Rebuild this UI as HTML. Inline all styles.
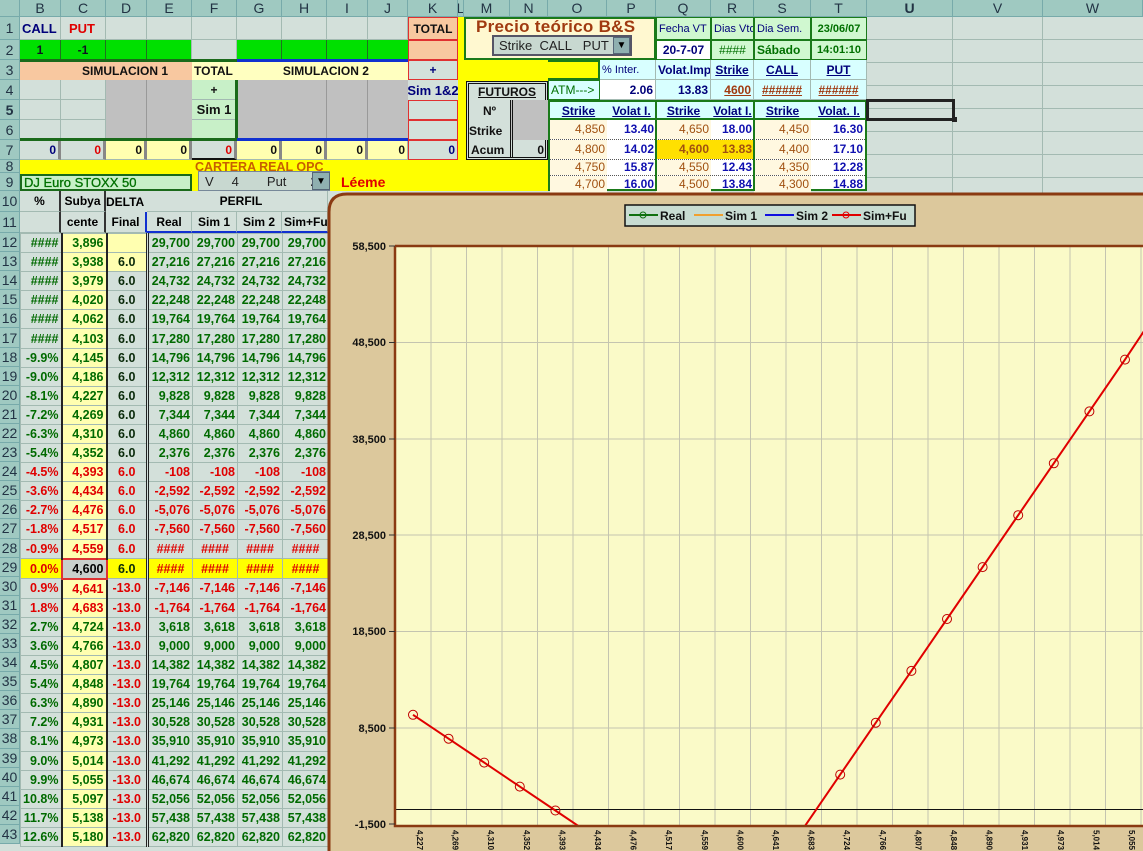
<!DOCTYPE html>
<html style="overflow:hidden"><head><meta charset="utf-8"><style>
body{margin:0;width:1143px;height:851px;overflow:hidden;position:relative;background:#d3e0da;font:bold 12px "Liberation Sans",sans-serif;}
.a{position:absolute;box-sizing:border-box;display:flex;align-items:center;white-space:nowrap;overflow:hidden;border-right:1px solid #a3bab2;border-bottom:1px solid #a3bab2;padding:0 2px;}
.r{justify-content:flex-end}.m{justify-content:center}
.h{background:#9fc9c1;color:#234;font-weight:normal;font-size:14px;justify-content:center;border-right:1px solid #7aa;border-bottom:1px solid #7aa}
.nv{color:#00007a}.rd{color:#e00000}.gn{color:#007000}.u{text-decoration:underline}
table.t{position:absolute;left:20px;top:233px;border-collapse:collapse;table-layout:fixed;}
table.t td{height:18.1px;padding:0 2px;text-align:right;border:1px solid #a3bab2;color:#006a00;background:#d3e0da;white-space:nowrap;overflow:hidden;font-size:12.5px}
table.t td.c{background:#ffffb0;border-left:2px solid #222;border-right:2px solid #222}
table.t td.d{text-align:center;border-right:3px double #222;color:#0a2a0a}
table.t tr.n td{color:#e00000}
table.t tr.y td{background:#ffff00;color:#e00000}
table.t tr.y td.c{background:#c8d0cc;color:#000;border:2px solid #d33}
table.t tr.y td.d{color:#0a2a0a}
table.t tr.p td.d{color:#e00000}
.sr{display:flex;box-sizing:border-box}
.sr div{box-sizing:border-box;text-align:right;padding-right:2px}
.sr .s{background:#fff8e0;color:#a05010;font-weight:normal}
.sr .v{color:#1010b0}
</style></head><body>
<div class="a h" style="left:0;top:0;width:20px;height:17px"></div>
<div class="a h" style="left:20px;top:0;width:41px;height:17px">B</div>
<div class="a h" style="left:61px;top:0;width:45px;height:17px">C</div>
<div class="a h" style="left:106px;top:0;width:41px;height:17px">D</div>
<div class="a h" style="left:147px;top:0;width:45px;height:17px">E</div>
<div class="a h" style="left:192px;top:0;width:45px;height:17px">F</div>
<div class="a h" style="left:237px;top:0;width:45px;height:17px">G</div>
<div class="a h" style="left:282px;top:0;width:45px;height:17px">H</div>
<div class="a h" style="left:327px;top:0;width:41px;height:17px">I</div>
<div class="a h" style="left:368px;top:0;width:40px;height:17px">J</div>
<div class="a h" style="left:408px;top:0;width:50px;height:17px">K</div>
<div class="a h" style="left:458px;top:0;width:6px;height:17px">L</div>
<div class="a h" style="left:464px;top:0;width:46px;height:17px">M</div>
<div class="a h" style="left:510px;top:0;width:38px;height:17px">N</div>
<div class="a h" style="left:548px;top:0;width:59px;height:17px">O</div>
<div class="a h" style="left:607px;top:0;width:49px;height:17px">P</div>
<div class="a h" style="left:656px;top:0;width:55px;height:17px">Q</div>
<div class="a h" style="left:711px;top:0;width:43px;height:17px">R</div>
<div class="a h" style="left:754px;top:0;width:57px;height:17px">S</div>
<div class="a h" style="left:811px;top:0;width:56px;height:17px">T</div>
<div class="a h" style="left:867px;top:0;width:86px;height:17px;font-weight:bold">U</div>
<div class="a h" style="left:953px;top:0;width:90px;height:17px">V</div>
<div class="a h" style="left:1043px;top:0;width:100px;height:17px">W</div>
<div class="a h" style="left:0;top:17px;width:20px;height:23px">1</div>
<div class="a h" style="left:0;top:40px;width:20px;height:20px">2</div>
<div class="a h" style="left:0;top:60px;width:20px;height:20px">3</div>
<div class="a h" style="left:0;top:80px;width:20px;height:20px">4</div>
<div class="a h" style="left:0;top:100px;width:20px;height:20px;font-weight:bold">5</div>
<div class="a h" style="left:0;top:120px;width:20px;height:20px">6</div>
<div class="a h" style="left:0;top:140px;width:20px;height:20px">7</div>
<div class="a h" style="left:0;top:160px;width:20px;height:13px">8</div>
<div class="a h" style="left:0;top:173px;width:20px;height:18px">9</div>
<div class="a h" style="left:0;top:191px;width:20px;height:21px">10</div>
<div class="a h" style="left:0;top:212px;width:20px;height:21px">11</div>
<div style="position:absolute;left:0;top:233px;width:20px">
<div class="a h" style="position:relative;width:20px;height:19.1px">12</div><div class="a h" style="position:relative;width:20px;height:19.1px">13</div><div class="a h" style="position:relative;width:20px;height:19.1px">14</div><div class="a h" style="position:relative;width:20px;height:19.1px">15</div><div class="a h" style="position:relative;width:20px;height:19.1px">16</div><div class="a h" style="position:relative;width:20px;height:19.1px">17</div><div class="a h" style="position:relative;width:20px;height:19.1px">18</div><div class="a h" style="position:relative;width:20px;height:19.1px">19</div><div class="a h" style="position:relative;width:20px;height:19.1px">20</div><div class="a h" style="position:relative;width:20px;height:19.1px">21</div><div class="a h" style="position:relative;width:20px;height:19.1px">22</div><div class="a h" style="position:relative;width:20px;height:19.1px">23</div><div class="a h" style="position:relative;width:20px;height:19.1px">24</div><div class="a h" style="position:relative;width:20px;height:19.1px">25</div><div class="a h" style="position:relative;width:20px;height:19.1px">26</div><div class="a h" style="position:relative;width:20px;height:19.1px">27</div><div class="a h" style="position:relative;width:20px;height:19.1px">28</div><div class="a h" style="position:relative;width:20px;height:19.1px">29</div><div class="a h" style="position:relative;width:20px;height:19.1px">30</div><div class="a h" style="position:relative;width:20px;height:19.1px">31</div><div class="a h" style="position:relative;width:20px;height:19.1px">32</div><div class="a h" style="position:relative;width:20px;height:19.1px">33</div><div class="a h" style="position:relative;width:20px;height:19.1px">34</div><div class="a h" style="position:relative;width:20px;height:19.1px">35</div><div class="a h" style="position:relative;width:20px;height:19.1px">36</div><div class="a h" style="position:relative;width:20px;height:19.1px">37</div><div class="a h" style="position:relative;width:20px;height:19.1px">38</div><div class="a h" style="position:relative;width:20px;height:19.1px">39</div><div class="a h" style="position:relative;width:20px;height:19.1px">40</div><div class="a h" style="position:relative;width:20px;height:19.1px">41</div><div class="a h" style="position:relative;width:20px;height:19.1px">42</div><div class="a h" style="position:relative;width:20px;height:19.1px">43</div>
</div>

<div class="a nv" style="left:20px;top:17px;width:41px;height:23px;font-size:13px">CALL</div>
<div class="a rd" style="left:61px;top:17px;width:45px;height:23px;font-size:13px;padding-left:8px">PUT</div>
<div class="a" style="left:106px;top:17px;width:41px;height:23px"></div>
<div class="a" style="left:147px;top:17px;width:45px;height:23px"></div>
<div class="a" style="left:192px;top:17px;width:45px;height:23px"></div>
<div class="a" style="left:237px;top:17px;width:45px;height:23px"></div>
<div class="a" style="left:282px;top:17px;width:45px;height:23px"></div>
<div class="a" style="left:327px;top:17px;width:41px;height:23px"></div>
<div class="a" style="left:368px;top:17px;width:40px;height:23px"></div>
<div class="a m" style="left:408px;top:17px;width:50px;height:23px;background:#f8c8a0;border:1px solid #e03030;color:#111">TOTAL</div>
<div style="position:absolute;left:20px;top:40px;width:172px;height:20px;background:#00e000"></div>
<div style="position:absolute;left:237px;top:40px;width:171px;height:20px;background:#00e000"></div>
<div class="a m" style="left:20px;top:40px;width:41px;height:20px;background:none;border-right:1px solid #207020;color:#112">1</div>
<div class="a m" style="left:61px;top:40px;width:45px;height:20px;background:none;border-right:1px solid #207020;color:#112">-1</div>
<div class="a" style="left:106px;top:40px;width:41px;height:20px;border-right:1px solid #207020"></div>
<div class="a" style="left:147px;top:40px;width:45px;height:20px"></div>
<div class="a" style="left:192px;top:40px;width:45px;height:20px"></div>
<div class="a" style="left:237px;top:40px;width:45px;height:20px;border-right:1px solid #207020"></div>
<div class="a" style="left:282px;top:40px;width:45px;height:20px;border-right:1px solid #207020"></div>
<div class="a" style="left:327px;top:40px;width:41px;height:20px;border-right:1px solid #207020"></div>
<div class="a" style="left:408px;top:40px;width:50px;height:20px;background:#f8c8a0;border:1px solid #e03030"></div>
<div style="position:absolute;left:20px;top:59px;width:217px;height:3px;background:#1a6a1a"></div>
<div style="position:absolute;left:237px;top:59px;width:171px;height:3px;background:#1030d0"></div>
<div class="a" style="left:20px;top:62px;width:172px;height:18px;background:#f8c8a0;justify-content:center;padding-left:40px;color:#111;border:none">SIMULACION 1</div>
<div class="a" style="left:192px;top:62px;width:216px;height:18px;background:#ffffc0;color:#111;border:none">TOTAL<span style="margin-left:50px">SIMULACION 2</span></div>
<div class="a m" style="left:408px;top:60px;width:50px;height:20px;border:1px solid #e03030;color:#00007a">+</div>
<div style="position:absolute;left:106px;top:80px;width:86px;height:60px;background:#c0c0c0"></div>
<div style="position:absolute;left:237px;top:80px;width:171px;height:60px;background:#c0c0c0"></div>
<div class="a" style="left:20px;top:80px;width:41px;height:20px"></div><div class="a" style="left:61px;top:80px;width:45px;height:20px"></div>
<div class="a" style="left:20px;top:100px;width:41px;height:20px"></div><div class="a" style="left:61px;top:100px;width:45px;height:20px"></div>
<div class="a" style="left:20px;top:120px;width:41px;height:20px"></div><div class="a" style="left:61px;top:120px;width:45px;height:20px"></div>
<div class="a" style="left:106px;top:80px;width:41px;height:60px;background:none;border-color:#999"></div>
<div class="a" style="left:282px;top:80px;width:45px;height:60px;background:none;border-color:#999"></div>
<div class="a" style="left:327px;top:80px;width:41px;height:60px;background:none;border-color:#999"></div>
<div class="a m" style="left:192px;top:80px;width:45px;height:20px;background:#c8f0c8;color:#111">+</div>
<div class="a m" style="left:192px;top:100px;width:45px;height:20px;background:#c8f0c8;color:#111;font-size:13px">Sim 1</div>
<div class="a m" style="left:192px;top:120px;width:45px;height:20px;background:#c8f0c8"></div>
<div style="position:absolute;left:235px;top:80px;width:3px;height:60px;background:#1a6a1a"></div>
<div class="a m nv" style="left:408px;top:80px;width:50px;height:20px;font-size:13px;border:none">Sim 1&amp;2</div>
<div class="a" style="left:408px;top:100px;width:50px;height:20px;border:1px solid #e03030"></div>
<div class="a" style="left:408px;top:120px;width:50px;height:20px;border:1px solid #e03030"></div>
<div style="position:absolute;left:20px;top:138px;width:217px;height:3px;background:#1a6a1a"></div>
<div style="position:absolute;left:237px;top:138px;width:171px;height:3px;background:#1030d0"></div>
<div class="a r nv" style="left:20px;top:141px;width:41px;height:19px;border-right:3px solid #888">0</div>
<div class="a r rd" style="left:61px;top:141px;width:45px;height:19px;border-right:3px solid #888">0</div>
<div class="a r" style="left:106px;top:141px;width:41px;height:19px;background:#ffffb0;border-right:3px solid #888;color:#111">0</div>
<div class="a r" style="left:147px;top:141px;width:45px;height:19px;background:#ffffb0;border-right:3px solid #888;color:#111">0</div>
<div class="a r rd" style="left:192px;top:141px;width:45px;height:19px;border-bottom:2px solid #111;border-right:3px solid #888">0</div>
<div class="a r" style="left:237px;top:141px;width:45px;height:19px;background:#ffffb0;border-right:3px solid #888;color:#111">0</div>
<div class="a r" style="left:282px;top:141px;width:45px;height:19px;background:#ffffb0;border-right:3px solid #888;color:#111">0</div>
<div class="a r" style="left:327px;top:141px;width:41px;height:19px;background:#ffffb0;border-right:3px solid #888;color:#111">0</div>
<div class="a r" style="left:368px;top:141px;width:40px;height:19px;background:#ffffb0;color:#111">0</div>
<div class="a r nv" style="left:408px;top:140px;width:50px;height:20px;border:1px solid #e03030">0</div>
<div style="position:absolute;left:20px;top:160px;width:444px;height:31px;background:#ffff00"></div>
<div style="position:absolute;left:458px;top:17px;width:6px;height:174px;background:#ffff00"></div>
<div style="position:absolute;left:195px;top:157px;font-size:12.5px;color:#c86000;font-weight:bold;height:15px;overflow:hidden;line-height:20px">CARTERA REAL OPC</div>
<div class="a gn" style="left:20px;top:174px;width:172px;height:17px;background:#c8f0c8;border:2px solid #1a6a1a;font-size:13px;font-weight:normal;-webkit-text-stroke:0.3px #007000">DJ Euro STOXX 50</div>
<div class="a" style="left:198px;top:171px;width:132px;height:20px;background:#c8d8d0;border:1px solid #789;font-weight:normal;font-size:13px;color:#222;padding-left:6px">V<span style="margin-left:18px">4</span><span style="margin-left:28px">Put</span><span style="margin-left:24px">29</span></div>
<div class="a m" style="left:312px;top:172px;width:18px;height:18px;background:#8fb0b0;border:1px solid #567;font-size:10px">▼</div>
<div style="position:absolute;left:341px;top:174px;color:#e00000;font-size:14px">Léeme</div>
<div class="a m" style="left:20px;top:191px;width:41px;height:21px;border-right:2px solid #333">%</div>
<div class="a m" style="left:61px;top:191px;width:45px;height:21px;border-right:2px solid #333">Subya</div>
<div class="a" style="left:106px;top:191px;width:45px;height:21px;border:none;padding:0">DELTA</div>
<div class="a m" style="left:147px;top:191px;width:181px;height:21px;padding-left:10px">PERFIL</div>
<div class="a" style="left:20px;top:212px;width:41px;height:21px;border-right:2px solid #333"></div>
<div class="a m" style="left:61px;top:212px;width:45px;height:21px;border-right:2px solid #333">cente</div>
<div class="a m" style="left:106px;top:212px;width:41px;height:21px;border-right:2px solid #1030d0">Final</div>
<div class="a m" style="left:147px;top:212px;width:45px;height:21px;border-bottom:2px solid #1030d0">Real</div>
<div class="a m" style="left:192px;top:212px;width:45px;height:21px;border-bottom:2px solid #1030d0">Sim 1</div>
<div class="a m" style="left:237px;top:212px;width:45px;height:21px;border-bottom:2px solid #1030d0">Sim 2</div>
<div class="a" style="left:282px;top:212px;width:46px;height:21px;border-bottom:2px solid #1030d0">Sim+Fu</div>

<div style="position:absolute;left:464px;top:17px;width:192px;height:43px;background:#fff8d0;border:2px solid #1a7a1a;box-sizing:border-box"></div>
<div style="position:absolute;left:476px;top:17px;color:#a03a10;font-size:17px;font-weight:bold;letter-spacing:0.3px">Precio teórico B&amp;S</div>
<div class="a" style="left:492px;top:35px;width:140px;height:21px;background:#c8d8d0;border:2px solid #556;font-weight:normal;font-size:13px;color:#222;padding-left:5px">Strike&nbsp; CALL&nbsp;&nbsp; PUT</div>
<div class="a m" style="left:613px;top:37px;width:17px;height:17px;background:#8fb0b0;border:1px solid #567;font-size:10px">▼</div>
<div class="a nv" style="left:656px;top:17px;width:55px;height:23px;background:#d0f8d0;border:1px solid #1a7a1a;font-weight:normal;font-size:11px">Fecha VT</div>
<div class="a m nv" style="left:656px;top:40px;width:55px;height:20px;background:#fff;border:1px solid #1a7a1a">20-7-07</div>
<div class="a nv" style="left:711px;top:17px;width:43px;height:23px;background:#d0f8d0;border:1px solid #1a7a1a;font-weight:normal;font-size:11px">Dias Vto</div>
<div class="a m gn" style="left:711px;top:40px;width:43px;height:20px;background:#d0f8d0;border:1px solid #1a7a1a;font-weight:normal">####</div>
<div class="a nv" style="left:754px;top:17px;width:57px;height:23px;background:#d0f8d0;border:1px solid #1a7a1a;font-weight:normal;font-size:11px">Dia Sem.</div>
<div class="a gn" style="left:754px;top:40px;width:57px;height:20px;background:#d0f8d0;border:1px solid #1a7a1a">Sábado</div>
<div class="a m gn" style="left:811px;top:17px;width:56px;height:23px;background:#d0f8d0;border:1px solid #1a7a1a;font-size:11px">23/06/07</div>
<div class="a m gn" style="left:811px;top:40px;width:56px;height:20px;background:#d0f8d0;border:1px solid #1a7a1a;font-size:11px">14:01:10</div>
<div style="position:absolute;left:464px;top:60px;width:84px;height:131px;background:#ffff00"></div>
<div style="position:absolute;left:548px;top:60px;width:52px;height:20px;background:#ffff00;border:2px solid #1a7a1a;border-left:none;box-sizing:border-box"></div>
<div class="a nv" style="left:600px;top:60px;width:56px;height:20px;background:#d8ffff;font-weight:normal;font-size:11px">% Inter.</div>
<div class="a nv" style="left:656px;top:60px;width:55px;height:20px;background:#d8ffff">Volat.Imp</div>
<div class="a m nv u" style="left:711px;top:60px;width:43px;height:20px;background:#d8ffff">Strike</div>
<div class="a m nv u" style="left:754px;top:60px;width:57px;height:20px;background:#d8ffff">CALL</div>
<div class="a m nv u" style="left:811px;top:60px;width:56px;height:20px;background:#d8ffff">PUT</div>
<div class="a gn" style="left:548px;top:80px;width:52px;height:20px;background:#d8ffff;border:1px solid #1a7a1a;font-weight:normal">ATM---&gt;</div>
<div class="a r nv" style="left:600px;top:80px;width:56px;height:20px;background:#fff">2.06</div>
<div class="a r nv" style="left:656px;top:80px;width:55px;height:20px;background:#d8ffff">13.83</div>
<div class="a r u" style="left:711px;top:80px;width:43px;height:20px;background:#d8ffff;color:#a03a10">4600</div>
<div class="a m u" style="left:754px;top:80px;width:57px;height:20px;background:#d8ffff;color:#a03a10">######</div>
<div class="a m u" style="left:811px;top:80px;width:56px;height:20px;background:#d8ffff;color:#a03a10">######</div>
<div style="position:absolute;left:466px;top:81px;width:82px;height:79px;border:3px double #111;box-sizing:border-box;background:#d3e0da"></div>
<div class="a m u" style="left:469px;top:84px;width:76px;height:16px;border:none;color:#111">FUTUROS</div>
<div style="position:absolute;left:510px;top:100px;width:36px;height:40px;background:#c0c0c0;border-left:3px double #111"></div>
<div class="a m" style="left:469px;top:101px;width:41px;height:19px;border:none;color:#111">Nº</div>
<div class="a" style="left:469px;top:121px;width:41px;height:19px;border:none;color:#111;padding:0">Strike</div>
<div class="a" style="left:469px;top:141px;width:41px;height:17px;border:none;color:#111">Acum</div>
<div style="position:absolute;left:510px;top:140px;width:36px;height:18px;border-left:3px double #111;box-sizing:border-box"></div>
<div class="a r" style="left:513px;top:141px;width:33px;height:17px;border:none;color:#111">0</div>
<div style="position:absolute;left:548px;top:100px;width:319px;height:91px;border:2px solid #1a7a1a;box-sizing:border-box;background:#fff"></div>
<div style="position:absolute;left:548px;top:100px;width:319px;height:20px;background:#d8ffff;border:2px solid #1a7a1a;box-sizing:border-box"></div>
<div class="a m nv u" style="left:550px;top:102px;width:57px;height:18px;border:none">Strike</div>
<div class="a m nv u" style="left:607px;top:102px;width:49px;height:18px;border:none">Volat I.</div>
<div class="a m nv u" style="left:656px;top:102px;width:55px;height:18px;border:none">Strike</div>
<div class="a m nv u" style="left:711px;top:102px;width:43px;height:18px;border:none">Volat I.</div>
<div class="a m nv u" style="left:754px;top:102px;width:57px;height:18px;border:none">Strike</div>
<div class="a m nv u" style="left:811px;top:102px;width:56px;height:18px;border:none">Volat. I.</div>
<div style="position:absolute;left:550px;top:120px;width:315px;font-size:12px">
<div class="sr" style="height:20px;line-height:19px;border-bottom:1px dotted #555"><div class="s" style="width:57px">4,850</div><div class="v" style="width:49px">13.40</div><div class="s" style="width:55px">4,650</div><div class="v" style="width:43px">18.00</div><div class="s" style="width:57px">4,450</div><div class="v" style="width:54px">16.30</div></div>
<div class="sr" style="height:20px;line-height:19px;border-bottom:1px dotted #555"><div class="s" style="width:57px">4,800</div><div class="v" style="width:49px">14.02</div><div class="s" style="width:55px;background:#ffe000;font-weight:bold">4,600</div><div class="v" style="width:43px;background:#ffe000;color:#a05010">13.83</div><div class="s" style="width:57px">4,400</div><div class="v" style="width:54px">17.10</div></div>
<div class="sr" style="height:16px;line-height:15px;border-bottom:1px dotted #555"><div class="s" style="width:57px">4,750</div><div class="v" style="width:49px">15.87</div><div class="s" style="width:55px">4,550</div><div class="v" style="width:43px">12.43</div><div class="s" style="width:57px">4,350</div><div class="v" style="width:54px">12.28</div></div>
<div class="sr" style="height:17px;line-height:16px"><div class="s" style="width:57px">4,700</div><div class="v" style="width:49px">16.00</div><div class="s" style="width:55px">4,500</div><div class="v" style="width:43px">13.84</div><div class="s" style="width:57px">4,300</div><div class="v" style="width:54px">14.88</div></div>
</div>
<div style="position:absolute;left:655px;top:100px;width:2px;height:91px;background:#1a7a1a"></div>
<div style="position:absolute;left:753px;top:100px;width:2px;height:91px;background:#1a7a1a"></div>
<div style="position:absolute;left:867px;top:17px;width:276px;height:176px;background-image:linear-gradient(90deg,transparent 85px,#a3bab2 85px,#a3bab2 86px,transparent 86px,transparent 175px,#a3bab2 175px,#a3bab2 176px,transparent 176px),repeating-linear-gradient(180deg,transparent 0,transparent 22px,#a3bab2 22px,#a3bab2 23px);"></div>
<div style="position:absolute;left:866px;top:99px;width:89px;height:22px;border:3px solid #222;box-sizing:border-box"></div>
<div style="position:absolute;left:952px;top:117px;width:5px;height:5px;background:#222"></div>

<table class="t"><colgroup><col style="width:41px"><col style="width:45px"><col style="width:41px"><col style="width:45px"><col style="width:45px"><col style="width:45px"><col style="width:46px"></colgroup>
<tr><td>####</td><td class="c">3,896</td><td class="d" style="background:#ffffb0"></td><td>29,700</td><td>29,700</td><td>29,700</td><td>29,700</td></tr>
<tr><td>####</td><td class="c">3,938</td><td class="d" style="background:#ffffb0">6.0</td><td>27,216</td><td>27,216</td><td>27,216</td><td>27,216</td></tr>
<tr><td>####</td><td class="c">3,979</td><td class="d">6.0</td><td>24,732</td><td>24,732</td><td>24,732</td><td>24,732</td></tr>
<tr><td>####</td><td class="c">4,020</td><td class="d">6.0</td><td>22,248</td><td>22,248</td><td>22,248</td><td>22,248</td></tr>
<tr><td>####</td><td class="c">4,062</td><td class="d">6.0</td><td>19,764</td><td>19,764</td><td>19,764</td><td>19,764</td></tr>
<tr><td>####</td><td class="c">4,103</td><td class="d">6.0</td><td>17,280</td><td>17,280</td><td>17,280</td><td>17,280</td></tr>
<tr><td>-9.9%</td><td class="c">4,145</td><td class="d">6.0</td><td>14,796</td><td>14,796</td><td>14,796</td><td>14,796</td></tr>
<tr><td>-9.0%</td><td class="c">4,186</td><td class="d">6.0</td><td>12,312</td><td>12,312</td><td>12,312</td><td>12,312</td></tr>
<tr><td>-8.1%</td><td class="c">4,227</td><td class="d">6.0</td><td>9,828</td><td>9,828</td><td>9,828</td><td>9,828</td></tr>
<tr><td>-7.2%</td><td class="c">4,269</td><td class="d">6.0</td><td>7,344</td><td>7,344</td><td>7,344</td><td>7,344</td></tr>
<tr><td>-6.3%</td><td class="c">4,310</td><td class="d">6.0</td><td>4,860</td><td>4,860</td><td>4,860</td><td>4,860</td></tr>
<tr><td>-5.4%</td><td class="c">4,352</td><td class="d">6.0</td><td>2,376</td><td>2,376</td><td>2,376</td><td>2,376</td></tr>
<tr class="n"><td>-4.5%</td><td class="c">4,393</td><td class="d">6.0</td><td>-108</td><td>-108</td><td>-108</td><td>-108</td></tr>
<tr class="n"><td>-3.6%</td><td class="c">4,434</td><td class="d">6.0</td><td>-2,592</td><td>-2,592</td><td>-2,592</td><td>-2,592</td></tr>
<tr class="n"><td>-2.7%</td><td class="c">4,476</td><td class="d">6.0</td><td>-5,076</td><td>-5,076</td><td>-5,076</td><td>-5,076</td></tr>
<tr class="n"><td>-1.8%</td><td class="c">4,517</td><td class="d">6.0</td><td>-7,560</td><td>-7,560</td><td>-7,560</td><td>-7,560</td></tr>
<tr class="n"><td>-0.9%</td><td class="c">4,559</td><td class="d">6.0</td><td style="text-align:center">####</td><td style="text-align:center">####</td><td style="text-align:center">####</td><td style="text-align:center">####</td></tr>
<tr class="y"><td>0.0%</td><td class="c">4,600</td><td class="d">6.0</td><td style="text-align:center">####</td><td style="text-align:center">####</td><td style="text-align:center">####</td><td style="text-align:center">####</td></tr>
<tr class="n p"><td>0.9%</td><td class="c">4,641</td><td class="d">-13.0</td><td>-7,146</td><td>-7,146</td><td>-7,146</td><td>-7,146</td></tr>
<tr class="n p"><td>1.8%</td><td class="c">4,683</td><td class="d">-13.0</td><td>-1,764</td><td>-1,764</td><td>-1,764</td><td>-1,764</td></tr>
<tr class="p"><td>2.7%</td><td class="c">4,724</td><td class="d">-13.0</td><td>3,618</td><td>3,618</td><td>3,618</td><td>3,618</td></tr>
<tr class="p"><td>3.6%</td><td class="c">4,766</td><td class="d">-13.0</td><td>9,000</td><td>9,000</td><td>9,000</td><td>9,000</td></tr>
<tr class="p"><td>4.5%</td><td class="c">4,807</td><td class="d">-13.0</td><td>14,382</td><td>14,382</td><td>14,382</td><td>14,382</td></tr>
<tr class="p"><td>5.4%</td><td class="c">4,848</td><td class="d">-13.0</td><td>19,764</td><td>19,764</td><td>19,764</td><td>19,764</td></tr>
<tr class="p"><td>6.3%</td><td class="c">4,890</td><td class="d">-13.0</td><td>25,146</td><td>25,146</td><td>25,146</td><td>25,146</td></tr>
<tr class="p"><td>7.2%</td><td class="c">4,931</td><td class="d">-13.0</td><td>30,528</td><td>30,528</td><td>30,528</td><td>30,528</td></tr>
<tr class="p"><td>8.1%</td><td class="c">4,973</td><td class="d">-13.0</td><td>35,910</td><td>35,910</td><td>35,910</td><td>35,910</td></tr>
<tr class="p"><td>9.0%</td><td class="c">5,014</td><td class="d">-13.0</td><td>41,292</td><td>41,292</td><td>41,292</td><td>41,292</td></tr>
<tr class="p"><td>9.9%</td><td class="c">5,055</td><td class="d">-13.0</td><td>46,674</td><td>46,674</td><td>46,674</td><td>46,674</td></tr>
<tr class="p"><td>10.8%</td><td class="c">5,097</td><td class="d">-13.0</td><td>52,056</td><td>52,056</td><td>52,056</td><td>52,056</td></tr>
<tr class="p"><td>11.7%</td><td class="c">5,138</td><td class="d">-13.0</td><td>57,438</td><td>57,438</td><td>57,438</td><td>57,438</td></tr>
<tr class="p"><td>12.6%</td><td class="c">5,180</td><td class="d">-13.0</td><td>62,820</td><td>62,820</td><td>62,820</td><td>62,820</td></tr>
</table>

<svg style="position:absolute;left:0;top:0" width="1143" height="851" xmlns="http://www.w3.org/2000/svg">
<defs><clipPath id="pc"><rect x="396" y="247" width="747" height="578"/></clipPath></defs>
<path d="M329 860 L329 212 Q329 194 347 194 L1150 194 L1150 860 Z" fill="#dcc89c" stroke="#8a3a12" stroke-width="3"/>
<rect x="395" y="246" width="760" height="579" fill="#fafac8"/>
<g stroke="#c4c4b0" stroke-width="1">
<line x1="431" y1="246" x2="431" y2="825"/><line x1="466.5" y1="246" x2="466.5" y2="825"/><line x1="502" y1="246" x2="502" y2="825"/><line x1="537.5" y1="246" x2="537.5" y2="825"/><line x1="573" y1="246" x2="573" y2="825"/><line x1="608.5" y1="246" x2="608.5" y2="825"/><line x1="644" y1="246" x2="644" y2="825"/><line x1="679.5" y1="246" x2="679.5" y2="825"/><line x1="715" y1="246" x2="715" y2="825"/><line x1="750.5" y1="246" x2="750.5" y2="825"/><line x1="786" y1="246" x2="786" y2="825"/><line x1="821.5" y1="246" x2="821.5" y2="825"/><line x1="857" y1="246" x2="857" y2="825"/><line x1="892.5" y1="246" x2="892.5" y2="825"/><line x1="928" y1="246" x2="928" y2="825"/><line x1="963.5" y1="246" x2="963.5" y2="825"/><line x1="999" y1="246" x2="999" y2="825"/><line x1="1034.5" y1="246" x2="1034.5" y2="825"/><line x1="1070" y1="246" x2="1070" y2="825"/><line x1="1105.5" y1="246" x2="1105.5" y2="825"/><line x1="1141" y1="246" x2="1141" y2="825"/>
<line x1="395" y1="342.5" x2="1143" y2="342.5"/><line x1="395" y1="439" x2="1143" y2="439"/><line x1="395" y1="535" x2="1143" y2="535"/><line x1="395" y1="631.5" x2="1143" y2="631.5"/><line x1="395" y1="728" x2="1143" y2="728"/>
</g>
<line x1="395" y1="809.5" x2="1143" y2="809.5" stroke="#111" stroke-width="1"/>
<path d="M395 246 H1143 M395 246 V826 H1143" fill="none" stroke="#8a3a12" stroke-width="2.5"/>
<g stroke="#333" stroke-width="1">
<line x1="389" y1="246" x2="395" y2="246"/><line x1="389" y1="342.5" x2="395" y2="342.5"/><line x1="389" y1="439" x2="395" y2="439"/><line x1="389" y1="535" x2="395" y2="535"/><line x1="389" y1="631.5" x2="395" y2="631.5"/><line x1="389" y1="728" x2="395" y2="728"/><line x1="389" y1="824" x2="395" y2="824"/>
</g>
<g font-family="Liberation Sans,sans-serif" font-weight="bold" font-size="11" fill="#111" text-anchor="end">
<text x="386" y="250">58,500</text><text x="386" y="346">48,500</text><text x="386" y="443">38,500</text><text x="386" y="539">28,500</text><text x="386" y="635">18,500</text><text x="386" y="732">8,500</text><text x="386" y="828">-1,500</text>
</g>
<g clip-path="url(#pc)">
<polyline fill="none" stroke="#e00000" stroke-width="2" points="413,714.8 448.6,738.7 484.2,762.6 519.8,786.6 555.4,810.5 591,834.5 626.6,858.4 662.2,882.4 697.8,906 733.4,930 769,878.4 804.6,826.5 840.2,774.6 875.8,722.7 911.4,670.9 947,619 982.6,567.1 1018.2,515.2 1053.8,463.3 1089.4,411.4 1125,359.6 1160,307"/>
<g fill="none" stroke="#c00000" stroke-width="1">
<circle cx="413" cy="714.8" r="4.5"/><circle cx="448.6" cy="738.7" r="4.5"/><circle cx="484.2" cy="762.6" r="4.5"/><circle cx="519.8" cy="786.6" r="4.5"/><circle cx="555.4" cy="810.5" r="4.5"/><circle cx="840.2" cy="774.6" r="4.5"/><circle cx="875.8" cy="722.7" r="4.5"/><circle cx="911.4" cy="670.9" r="4.5"/><circle cx="947" cy="619" r="4.5"/><circle cx="982.6" cy="567.1" r="4.5"/><circle cx="1018.2" cy="515.2" r="4.5"/><circle cx="1053.8" cy="463.3" r="4.5"/><circle cx="1089.4" cy="411.4" r="4.5"/><circle cx="1125" cy="359.6" r="4.5"/>
</g></g>
<g font-family="Liberation Sans,sans-serif" font-weight="bold" font-size="8" fill="#111">
<text transform="translate(417 830) rotate(90)">4,227</text><text transform="translate(452.6 830) rotate(90)">4,269</text><text transform="translate(488.2 830) rotate(90)">4,310</text><text transform="translate(523.8 830) rotate(90)">4,352</text><text transform="translate(559.4 830) rotate(90)">4,393</text><text transform="translate(595 830) rotate(90)">4,434</text><text transform="translate(630.6 830) rotate(90)">4,476</text><text transform="translate(666.2 830) rotate(90)">4,517</text><text transform="translate(701.8 830) rotate(90)">4,559</text><text transform="translate(737.4 830) rotate(90)">4,600</text><text transform="translate(773 830) rotate(90)">4,641</text><text transform="translate(808.6 830) rotate(90)">4,683</text><text transform="translate(844.2 830) rotate(90)">4,724</text><text transform="translate(879.8 830) rotate(90)">4,766</text><text transform="translate(915.4 830) rotate(90)">4,807</text><text transform="translate(951 830) rotate(90)">4,848</text><text transform="translate(986.6 830) rotate(90)">4,890</text><text transform="translate(1022.2 830) rotate(90)">4,931</text><text transform="translate(1057.8 830) rotate(90)">4,973</text><text transform="translate(1093.4 830) rotate(90)">5,014</text><text transform="translate(1129 830) rotate(90)">5,055</text>
</g>
<rect x="625" y="205" width="290" height="21" fill="#c8dcd2" stroke="#111" stroke-width="1.5"/>
<line x1="629" y1="215" x2="658" y2="215" stroke="#107010" stroke-width="2"/><circle cx="643" cy="215" r="3" fill="none" stroke="#107010"/>
<line x1="694" y1="215" x2="723" y2="215" stroke="#f0a030" stroke-width="2"/>
<line x1="765" y1="215" x2="794" y2="215" stroke="#1010e0" stroke-width="2"/>
<line x1="832" y1="215" x2="861" y2="215" stroke="#e00000" stroke-width="2"/><circle cx="846" cy="215" r="3" fill="none" stroke="#e00000"/>
<g font-family="Liberation Sans,sans-serif" font-weight="bold" font-size="12" fill="#111">
<text x="660" y="220">Real</text><text x="725" y="220">Sim 1</text><text x="796" y="220">Sim 2</text><text x="863" y="220">Sim+Fu</text>
</g>
</svg>
</body></html>
